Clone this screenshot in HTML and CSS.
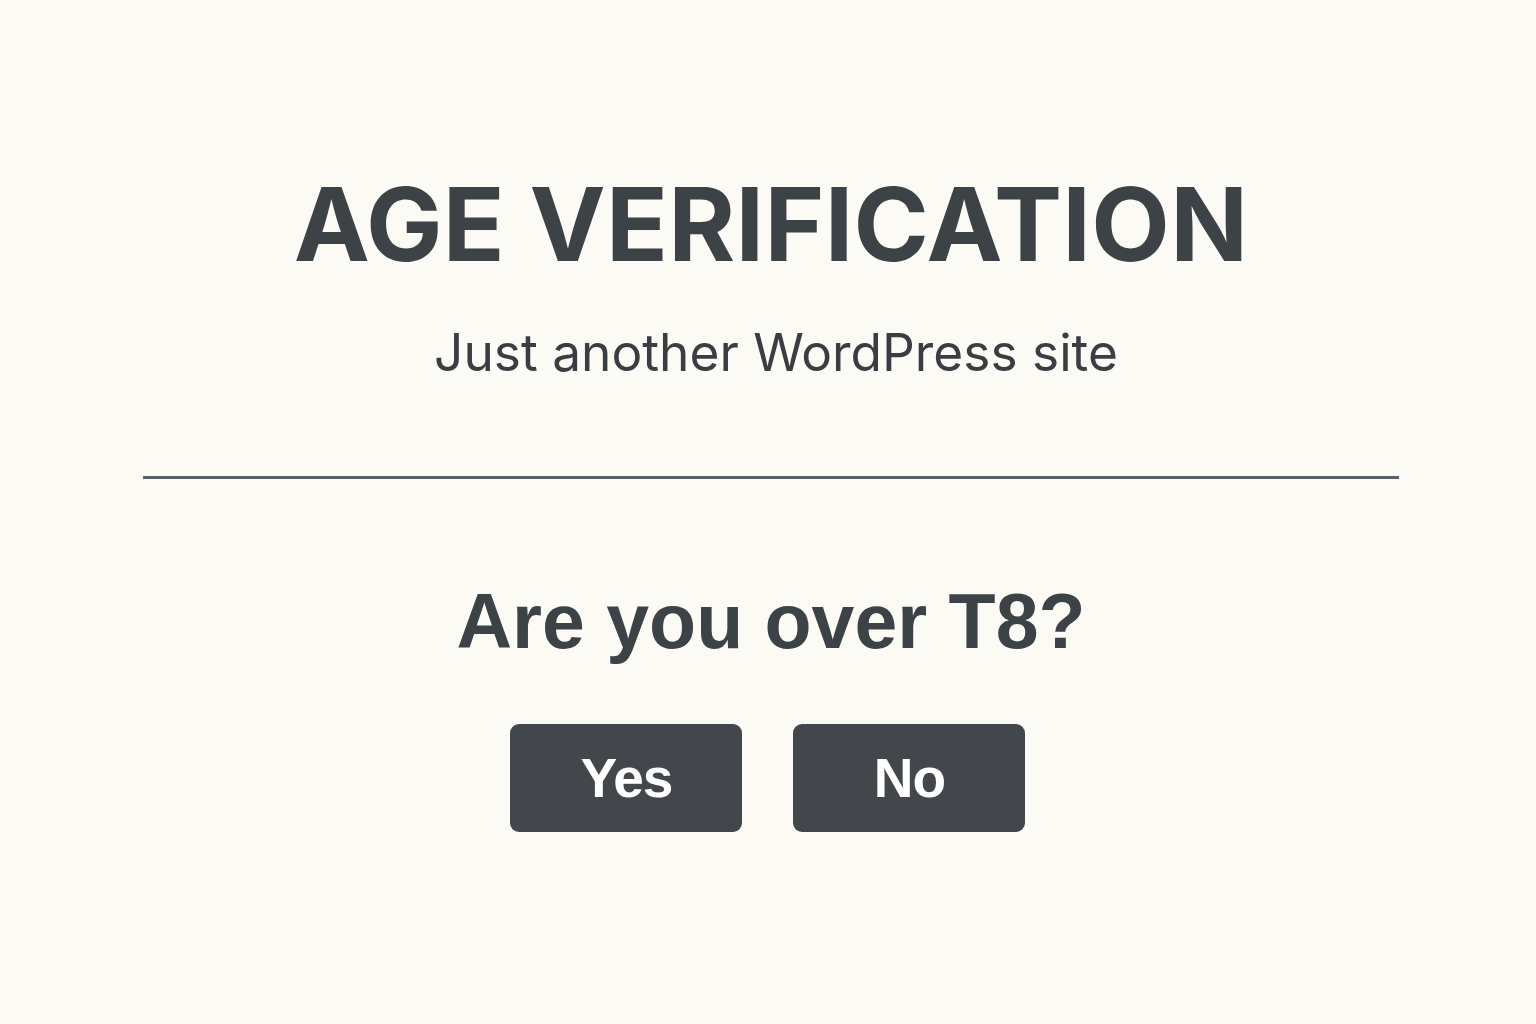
FILE: index.html
```html
<!DOCTYPE html>
<html lang="en">
<head>
<meta charset="utf-8">
<title>Age Verification</title>
<link rel="stylesheet" href="styles.css">
</head>
<body>
<main class="gate">
  <header class="site-head">
    <h1 class="site-title">AGE VERIFICATION</h1>
    <p class="site-tagline">Just another WordPress site</p>
  </header>
  <hr class="divider">
  <section class="prompt">
    <h2 class="prompt-question">Are you over T8?</h2>
    <div class="prompt-actions">
      <button class="btn" type="button">Yes</button>
      <button class="btn" type="button">No</button>
    </div>
  </section>
</main>
</body>
</html>
```

FILE: styles.css
```css
html, body {
  margin: 0;
  padding: 0;
}

body {
  background: #fbfaf5;
  color: #3d4247;
  width: 1536px;
  height: 1024px;
  overflow: hidden;
}

.gate {
  display: flex;
  flex-direction: column;
  align-items: center;
  padding-top: 171px;
  padding-left: 6px;
}

.site-head {
  display: flex;
  flex-direction: column;
  align-items: center;
}

.site-title {
  margin: 0;
  font-family: Inter, "Liberation Sans", sans-serif;
  font-weight: 700;
  font-size: 102px;
  line-height: 106px;
  letter-spacing: 0.3px;
  color: #3d4247;
}

.site-tagline {
  margin: 45px 0 0 10px;
  font-family: Inter, "Liberation Sans", sans-serif;
  font-weight: 400;
  font-size: 51.4px;
  line-height: 60px;
  color: #3a3e43;
}

.divider {
  width: 1256px;
  height: 3px;
  margin: 94px 0 0;
  border: 0;
  background: #5b6067;
}

.prompt {
  display: flex;
  flex-direction: column;
  align-items: center;
}

.prompt-question {
  margin: 97px 0 0;
  font-family: "Liberation Sans", Arial, sans-serif;
  font-weight: 700;
  font-size: 77px;
  line-height: 90px;
  color: #3d4247;
}

.prompt-actions {
  display: flex;
  gap: 51px;
  margin-top: 58px;
  margin-left: -6px;
}

.btn {
  width: 232px;
  height: 108px;
  border: 0;
  border-radius: 9px;
  background: #43474c;
  color: #ffffff;
  font-family: "Liberation Sans", Arial, sans-serif;
  font-weight: 700;
  font-size: 55px;
  letter-spacing: -1px;
  cursor: pointer;
}
```
